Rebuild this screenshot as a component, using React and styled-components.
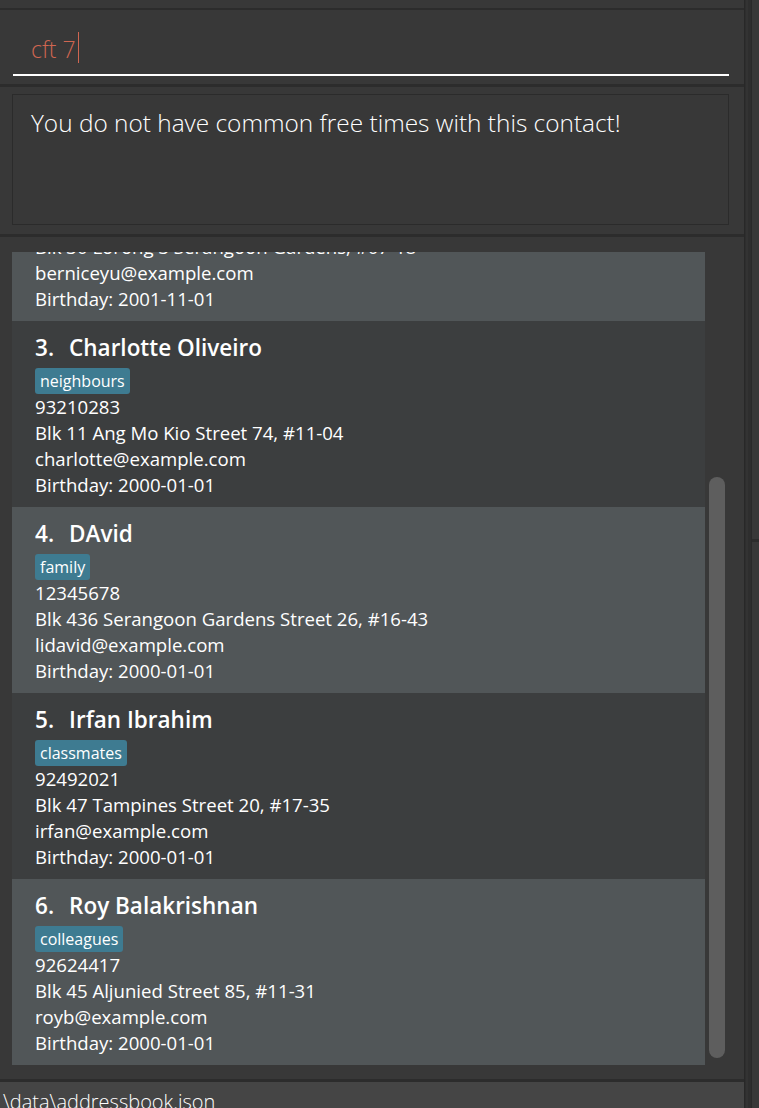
import React, { useLayoutEffect, useRef, useState } from "react";
import styled, { createGlobalStyle } from "styled-components";

const GlobalStyle = createGlobalStyle`
  html, body {
    margin: 0;
    padding: 0;
    background: #383838;
  }
  body {
    font-family: "Open Sans", "Noto Sans", sans-serif;
    color: #ffffff;
  }
`;

const Window = styled.div`
  display: flex;
  width: 759px;
  height: 1108px;
  overflow: hidden;
  background: #383838;
`;

const Main = styled.div`
  display: flex;
  flex-direction: column;
  width: 744px;
  flex: none;
`;

const Divider = styled.div`
  height: ${(p) => p.size || 3}px;
  background: #2c2c2c;
  flex: none;
`;

const TopStub = styled.div`
  height: 8px;
  background: #383838;
  flex: none;
`;

const CommandPane = styled.div`
  height: 74px;
  flex: none;
  box-sizing: border-box;
  padding: 0 15px 0 13px;
  background: #383838;
  display: flex;
  flex-direction: column;
  justify-content: flex-end;
`;

const CommandField = styled.div`
  height: 60px;
  box-sizing: border-box;
  padding: 18px 0 0 18px;
  border-bottom: 2px solid #ffffff;
  margin-bottom: 8px;
  font-family: "Open Sans", "Noto Sans", sans-serif;
  font-weight: 300;
  font-size: 23px;
  line-height: 30px;
  color: #d06651;
  display: flex;
  align-items: flex-start;
`;

const Caret = styled.span`
  display: inline-block;
  width: 1px;
  height: 31px;
  margin-top: -2px;
  margin-left: 2px;
  background: #d06651;
`;

const ResultPane = styled.div`
  height: 147px;
  flex: none;
  box-sizing: border-box;
  padding: 7px 15px 9px 12px;
  background: #383838;
  display: flex;
`;

const ResultBox = styled.div`
  flex: 1;
  box-sizing: border-box;
  border: 1px solid #2b2b2b;
  padding: 12px 18px;
  font-family: "Open Sans", "Noto Sans", sans-serif;
  font-weight: 300;
  font-size: 24.4px;
  line-height: 32px;
  color: #ffffff;
`;

const ListPane = styled.div`
  flex: 1;
  min-height: 0;
  box-sizing: border-box;
  padding: 15px 19px 14px 12px;
  background: #383838;
  display: flex;
  gap: 4px;
`;

const Viewport = styled.div`
  width: 693px;
  flex: none;
  overflow: hidden;
`;

const Cell = styled.div`
  box-sizing: border-box;
  height: 186px;
  padding: 12px 0 9px 23px;
  background: ${(p) => (p.$odd ? "#3c3e3f" : "#515658")};
  color: #ffffff;
`;

const NameRow = styled.div`
  display: flex;
  gap: 15px;
  font-weight: 600;
  font-size: 22.5px;
  line-height: 30px;
  white-space: nowrap;
`;

const Tags = styled.div`
  display: flex;
  gap: 5px;
  margin-top: 5px;
  height: 26px;
`;

const Tag = styled.span`
  box-sizing: border-box;
  height: 26px;
  padding: 0 5px;
  border-radius: 3px;
  background: #3e7b91;
  font-weight: 500;
  font-size: 16px;
  line-height: 26px;
  color: #ffffff;
`;

const Detail = styled.div`
  font-size: 18.6px;
  line-height: 26px;
  white-space: nowrap;
`;

const Track = styled.div`
  width: 16px;
  flex: none;
  box-sizing: border-box;
  padding: 8px 0 7px;
  display: flex;
  flex-direction: column;
`;

const Thumb = styled.div`
  width: 16px;
  flex: none;
  border-radius: 8px;
  background: #5e5e5e;
`;

const StatusBar = styled.div`
  height: 26px;
  flex: none;
  overflow: hidden;
  background: #454545;
  padding: 7px 0 0 3px;
  box-sizing: border-box;
  font-family: "Open Sans", "Noto Sans", sans-serif;
  font-weight: 300;
  font-size: 20px;
  line-height: 26px;
  color: #ffffff;
  white-space: nowrap;
`;

const SideStrip = styled.div`
  flex: 1;
  display: flex;
  background: #2e2e2e;
  border-left: 1px solid #282828;
`;

const SideEdge = styled.div`
  width: 2px;
  background: #333333;
  margin-left: 1px;
`;

const SideColumn = styled.div`
  flex: 1;
  display: flex;
  flex-direction: column;
  margin-left: 3px;
  border-left: 1px solid #2a2a2a;
`;

const SideBox = styled.div`
  flex: ${(p) => (p.$grow ? 1 : "none")};
  height: ${(p) => (p.$grow ? "auto" : "539px")};
  background: #383838;
  border-bottom: ${(p) => (p.$grow ? "none" : "3px solid #2c2c2c")};
`;

const persons = [
  {
    name: "Alex Yeoh",
    tag: "friends",
    phone: "87438807",
    address: "Blk 30 Geylang Street 29, #06-40",
    email: "alexyeoh@example.com",
    birthday: "2000-01-01",
  },
  {
    name: "Bernice Yu",
    tag: "colleagues",
    phone: "99272758",
    address: "Blk 30 Lorong 3 Serangoon Gardens, #07-18",
    email: "berniceyu@example.com",
    birthday: "2001-11-01",
  },
  {
    name: "Charlotte Oliveiro",
    tag: "neighbours",
    phone: "93210283",
    address: "Blk 11 Ang Mo Kio Street 74, #11-04",
    email: "charlotte@example.com",
    birthday: "2000-01-01",
  },
  {
    name: "DAvid",
    tag: "family",
    phone: "12345678",
    address: "Blk 436 Serangoon Gardens Street 26, #16-43",
    email: "lidavid@example.com",
    birthday: "2000-01-01",
  },
  {
    name: "Irfan Ibrahim",
    tag: "classmates",
    phone: "92492021",
    address: "Blk 47 Tampines Street 20, #17-35",
    email: "irfan@example.com",
    birthday: "2000-01-01",
  },
  {
    name: "Roy Balakrishnan",
    tag: "colleagues",
    phone: "92624417",
    address: "Blk 45 Aljunied Street 85, #11-31",
    email: "royb@example.com",
    birthday: "2000-01-01",
  },
];

function PersonCard({ person, index }) {
  return (
    <Cell $odd={index % 2 === 0}>
      <NameRow>
        <span>{index + 1}.</span>
        <span>{person.name}</span>
      </NameRow>
      <Tags>
        <Tag>{person.tag}</Tag>
      </Tags>
      <Detail>{person.phone}</Detail>
      <Detail>{person.address}</Detail>
      <Detail>{person.email}</Detail>
      <Detail>Birthday: {person.birthday}</Detail>
    </Cell>
  );
}

export default function App() {
  const viewRef = useRef(null);
  const trackRef = useRef(null);
  const [thumb, setThumb] = useState({ top: 0, height: 0 });

  // the list sits scrolled to its end, as in the running app
  useLayoutEffect(() => {
    const view = viewRef.current;
    const track = trackRef.current;
    view.scrollTop = view.scrollHeight;
    const trackLen = track.clientHeight - 15;
    const height = (trackLen * view.clientHeight) / view.scrollHeight;
    const top =
      ((trackLen - height) * view.scrollTop) /
      Math.max(1, view.scrollHeight - view.clientHeight);
    setThumb({ top, height });
  }, []);

  return (
    <>
      <GlobalStyle />
      <Window>
        <Main>
          <TopStub />
          <Divider size={2} />
          <CommandPane>
            <CommandField>
              cft 7<Caret />
            </CommandField>
          </CommandPane>
          <Divider />
          <ResultPane>
            <ResultBox>You do not have common free times with this contact!</ResultBox>
          </ResultPane>
          <Divider />
          <ListPane>
            <Viewport ref={viewRef}>
              {persons.map((p, i) => (
                <PersonCard key={p.name} person={p} index={i} />
              ))}
            </Viewport>
            <Track ref={trackRef}>
              <Thumb style={{ marginTop: thumb.top, height: thumb.height }} />
            </Track>
          </ListPane>
          <Divider />
          <StatusBar>\data\addressbook.json</StatusBar>
        </Main>
        <SideStrip>
          <SideEdge />
          <SideColumn>
            <SideBox />
            <SideBox $grow />
          </SideColumn>
        </SideStrip>
      </Window>
    </>
  );
}
